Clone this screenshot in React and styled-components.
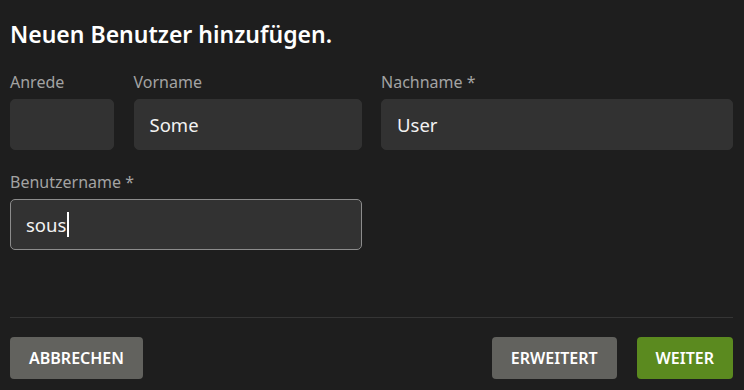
import React from "react";
import styled, { createGlobalStyle } from "styled-components";

const Global = createGlobalStyle`
  html, body {
    margin: 0;
    padding: 0;
    background: #1e1e1e;
    font-family: "Noto Sans", "Open Sans", "Liberation Sans", sans-serif;
  }
`;

const Page = styled.div`
  width: 744px;
  height: 390px;
  box-sizing: border-box;
  padding: 0 11px 0 10px;
  display: flex;
  flex-direction: column;
`;

const Title = styled.h1`
  margin: 19px 0 0 0;
  font-size: 23px;
  line-height: 30px;
  font-weight: 600;
  color: #ffffff;
`;

const Form = styled.div`
  margin-top: 22px;
  display: grid;
  grid-template-columns: 104px 228px 1fr;
  column-gap: 19.5px;
  row-gap: 21px;
`;

const Field = styled.div`
  display: flex;
  flex-direction: column;
  grid-column: ${(p) => p.span || "auto"};
`;

const Label = styled.label`
  font-size: 16px;
  line-height: 22px;
  color: #a3a3a3;
  margin-bottom: 6px;
`;

const Input = styled.div`
  height: 51px;
  box-sizing: border-box;
  background: #323232;
  border-radius: 5px;
  border: 1px solid ${(p) => (p.focused ? "#8c8c8c" : "#323232")};
  padding: 0 15px;
  display: flex;
  align-items: center;
  font-size: 18.5px;
  color: #f2f2f2;
`;

const Caret = styled.span`
  display: inline-block;
  width: 2px;
  height: 25px;
  background: #ffffff;
  margin-left: 1px;
`;

const Spacer = styled.div`
  flex: 1;
`;

const Divider = styled.div`
  height: 1px;
  background: #353535;
`;

const Footer = styled.div`
  display: flex;
  align-items: center;
  gap: 20px;
  padding: 19px 0 11px;
`;

const Button = styled.button`
  height: 42px;
  border: none;
  border-radius: 4px;
  padding: 0 19px;
  background: ${(p) => (p.primary ? "#5b8a1f" : "#62625e")};
  color: #ffffff;
  font-family: "Noto Sans", "Open Sans", "Liberation Sans", sans-serif;
  font-size: 16px;
  font-weight: 600;
  text-transform: uppercase;
  cursor: pointer;
`;

export default function App() {
  return (
    <>
      <Global />
      <Page>
        <Title>Neuen Benutzer hinzufügen.</Title>
        <Form>
          <Field>
            <Label>Anrede</Label>
            <Input />
          </Field>
          <Field>
            <Label>Vorname</Label>
            <Input>Some</Input>
          </Field>
          <Field>
            <Label>Nachname *</Label>
            <Input>User</Input>
          </Field>
          <Field span="1 / 3">
            <Label>Benutzername *</Label>
            <Input focused>
              sous
              <Caret />
            </Input>
          </Field>
        </Form>
        <Spacer />
        <Divider />
        <Footer>
          <Button>Abbrechen</Button>
          <Spacer />
          <Button>Erweitert</Button>
          <Button primary>Weiter</Button>
        </Footer>
      </Page>
    </>
  );
}
